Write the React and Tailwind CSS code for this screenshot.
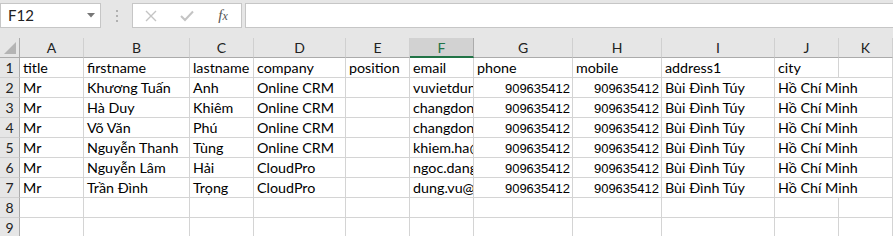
import React from "react";

const cols = ["A", "B", "C", "D", "E", "F", "G", "H", "I", "J", "K"];

const rows = [
  ["title", "firstname", "lastname", "company", "position", "email", "phone", "mobile", "address1", "city"],
  ["Mr", "Khương Tuấn", "Anh", "Online CRM", "", "vuvietdung@onlinecrm.vn", 909635412, 909635412, "Bùi Đình Túy", "Hồ Chí Minh"],
  ["Mr", "Hà Duy", "Khiêm", "Online CRM", "", "changdong@onlinecrm.vn", 909635412, 909635412, "Bùi Đình Túy", "Hồ Chí Minh"],
  ["Mr", "Võ Văn", "Phú", "Online CRM", "", "changdong@onlinecrm.vn", 909635412, 909635412, "Bùi Đình Túy", "Hồ Chí Minh"],
  ["Mr", "Nguyễn Thanh", "Tùng", "Online CRM", "", "khiem.ha@onlinecrm.vn", 909635412, 909635412, "Bùi Đình Túy", "Hồ Chí Minh"],
  ["Mr", "Nguyễn Lâm", "Hải", "CloudPro", "", "ngoc.dang@cloudpro.vn", 909635412, 909635412, "Bùi Đình Túy", "Hồ Chí Minh"],
  ["Mr", "Trần Đình", "Trọng", "CloudPro", "", "dung.vu@cloudpro.vn", 909635412, 909635412, "Bùi Đình Túy", "Hồ Chí Minh"],
];

const font = { fontFamily: "Lato, 'Liberation Sans', sans-serif" };
const numFont = { fontFamily: "'Liberation Sans', Arial, sans-serif" };

const Cell = ({ value, span }) => {
  const isNum = typeof value === "number";
  return (
    <div
      className={`h-5 border-r border-b border-[#d4d4d4] flex items-center overflow-hidden whitespace-nowrap text-black ${
        isNum ? "justify-end pr-[2px] pt-[2px] text-[13px]" : "pl-[3px] text-[14.3px]"
      } ${span ? "col-span-2" : ""}`}
      style={isNum ? numFont : undefined}
    >
      {value}
    </div>
  );
};

export default function App() {
  return (
    <div className="w-[893px] h-[236px] overflow-hidden bg-white" style={font}>
      {/* formula bar */}
      <div className="h-[38px] bg-[#e6e6e6] flex items-start pt-[3px]">
        <div className="w-[101px] h-[25px] bg-white border border-[#c6c6c6] flex items-center justify-between pl-[7px] pr-[5px]">
          <span className="text-[15px] text-[#222]">F12</span>
          <svg width="8" height="5" viewBox="0 0 8 5">
            <path d="M0 0 L8 0 L4 4.5 Z" fill="#777" />
          </svg>
        </div>
        <div className="w-[31px] h-[25px] flex flex-col items-center justify-center gap-[3px]">
          <span className="w-[2px] h-[2px] bg-[#b0b0b0]" />
          <span className="w-[2px] h-[2px] bg-[#b0b0b0]" />
          <span className="w-[2px] h-[2px] bg-[#b0b0b0]" />
        </div>
        <div className="w-[110px] h-[25px] bg-white border border-[#c6c6c6] flex items-center">
          <div className="w-[36px] flex justify-center">
            <svg width="12" height="12" viewBox="0 0 12 12">
              <path d="M1 1 L11 11 M11 1 L1 11" stroke="#c4c4c4" strokeWidth="1.4" />
            </svg>
          </div>
          <div className="w-[36px] flex justify-center">
            <svg width="14" height="12" viewBox="0 0 14 12">
              <path d="M1 6 L5 10 L13 1.5" stroke="#c4c4c4" strokeWidth="2" fill="none" />
            </svg>
          </div>
          <div className="w-[36px] flex justify-center">
            <span className="text-[15px] italic text-[#555]" style={{ fontFamily: "'Liberation Serif', serif" }}>
              f<span className="text-[12px]">x</span>
            </span>
          </div>
        </div>
        <div className="ml-[3px] flex-1 h-[25px] bg-white border border-[#c6c6c6] border-r-0" />
      </div>

      {/* sheet */}
      <div className="grid grid-cols-[20px_64px_106px_64px_92px_64px_64px_99px_89px_113px_64px_1fr]">
        {/* corner */}
        <div className="h-5 bg-[#e6e6e6] border-r border-b border-[#ababab] flex items-end justify-end p-[3px]">
          <svg width="12" height="12" viewBox="0 0 12 12">
            <path d="M12 0 L12 12 L0 12 Z" fill="#b4b4b4" />
          </svg>
        </div>
        {cols.map((c) =>
          c === "F" ? (
            <div
              key={c}
              className="h-5 bg-[#d2d2d2] border-r border-[#ababab] border-b-2 border-b-[#217346] flex items-center justify-center text-[14px] text-[#217346]"
            >
              {c}
            </div>
          ) : (
            <div
              key={c}
              className="h-5 bg-[#e6e6e6] border-r border-b border-r-[#d0d0d0] border-b-[#ababab] flex items-center justify-center text-[14px] text-[#222]"
            >
              {c}
            </div>
          )
        )}

        {rows.map((r, i) => (
          <React.Fragment key={i}>
            <div className="h-5 bg-[#e6e6e6] border-r border-r-[#ababab] border-b border-b-[#d0d0d0] flex items-center justify-center text-[14px] text-[#222]">
              {i + 1}
            </div>
            {r.map((v, j) => (
              <Cell key={j} value={v} span={j === 9 && i > 0} />
            ))}
            {i === 0 && <Cell value="" />}
          </React.Fragment>
        ))}

        {[8, 9].map((n) => (
          <React.Fragment key={n}>
            <div className="h-5 bg-[#e6e6e6] border-r border-r-[#ababab] border-b border-b-[#d0d0d0] flex items-center justify-center text-[14px] text-[#222]">
              {n}
            </div>
            {cols.map((c) => (
              <Cell key={c} value="" />
            ))}
          </React.Fragment>
        ))}
      </div>
    </div>
  );
}
